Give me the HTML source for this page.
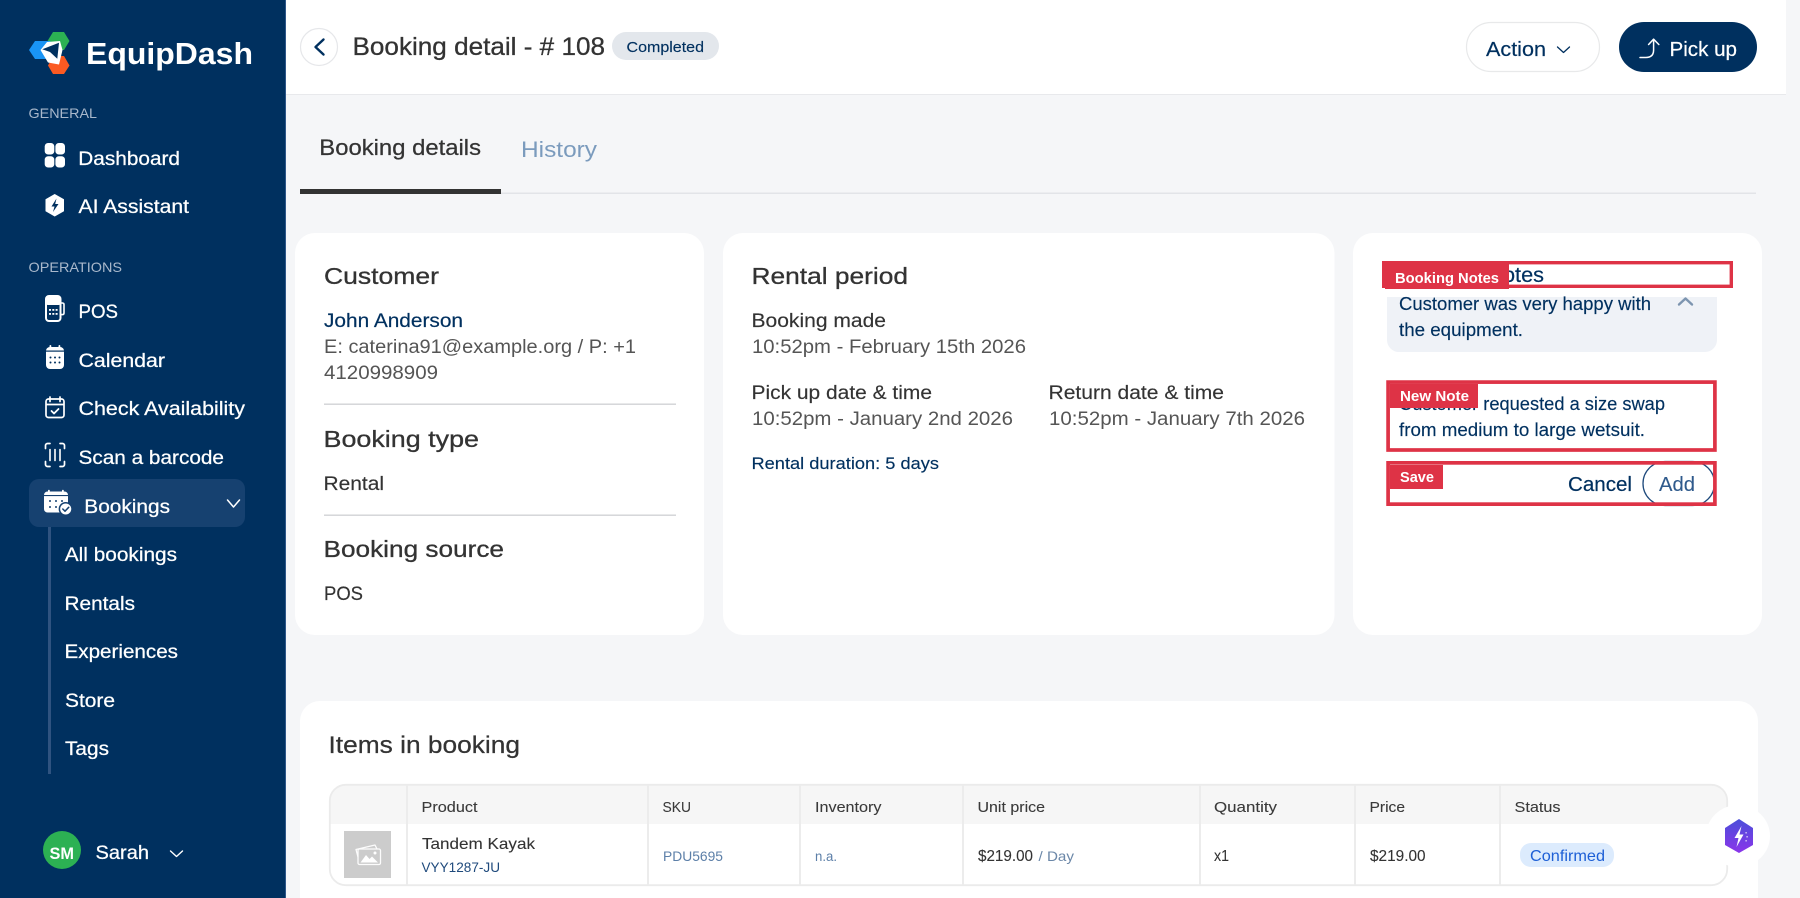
<!DOCTYPE html>
<html lang="en">
<head>
<meta charset="utf-8">
<title>Booking detail - # 108</title>
<style>
html,body{margin:0;padding:0;width:1800px;height:898px;overflow:hidden;background:#f5f6f8}
svg{display:block;position:absolute;left:0;top:0}
text{font-family:"Liberation Sans",sans-serif;white-space:pre}
.nav{font-size:19.5px;fill:#fff;stroke:#fff;stroke-width:.25px}
.sec{font-size:14px;fill:#a9b8cb}
.h{font-size:23px;fill:#333;stroke:#333;stroke-width:.3px}
.b{font-size:19px;fill:#333;stroke:#333;stroke-width:.15px}
.g{font-size:19px;fill:#555}
.n{font-size:18px;fill:#00305f;stroke:#00305f;stroke-width:.15px}
.lab{font-size:14.5px;font-weight:700;fill:#fff}
.th{font-size:15px;fill:#3a3a3a;stroke:#3a3a3a;stroke-width:.1px}
.td{font-size:16px;fill:#333;stroke:#333;stroke-width:.1px}
.lnk{font-size:14px;fill:#5c7fa8}
</style>
</head>
<body>
<svg width="1800" height="898" viewBox="0 0 1800 898" xmlns="http://www.w3.org/2000/svg">
<defs>
<linearGradient id="ai" x1="0" y1="0" x2="0" y2="1"><stop offset="0" stop-color="#4b4fd9"/><stop offset="1" stop-color="#8b35ea"/></linearGradient>
</defs>

<!-- main bg -->
<rect width="1800" height="898" fill="#f5f6f8"/>

<!-- header -->
<rect x="286" y="0" width="1500" height="94" fill="#fff"/>
<rect x="286" y="94" width="1500" height="1" fill="#e8e9ec"/>
<circle cx="319" cy="47" r="18.5" fill="#fff" stroke="#e6e7ea" stroke-width="1.2"/>
<path d="M323.5 39.5L315.5 47L323.5 54.5" fill="none" stroke="#00305f" stroke-width="2.4" stroke-linecap="round" stroke-linejoin="round"/>
<text x="352.5" y="55" font-size="25" fill="#333" stroke="#333" stroke-width=".3" textLength="252.5" lengthAdjust="spacingAndGlyphs">Booking detail - # 108</text>
<rect x="612" y="32" width="107" height="28" rx="14" fill="#e3e7ec"/>
<text x="626.5" y="52" font-size="15" fill="#00305f" stroke="#00305f" stroke-width=".15" textLength="77.5" lengthAdjust="spacingAndGlyphs">Completed</text>

<rect x="1466.5" y="22.5" width="133" height="49" rx="24.5" fill="#fff" stroke="#e8e9ea" stroke-width="1.2"/>
<text x="1486" y="56" font-size="20" fill="#00305f" stroke="#00305f" stroke-width=".2" textLength="60" lengthAdjust="spacingAndGlyphs">Action</text>
<path d="M1557.5 47L1563.5 52.5L1569.5 47" fill="none" stroke="#00305f" stroke-width="1.3" stroke-linecap="round" stroke-linejoin="round"/>
<rect x="1619" y="22" width="138" height="50" rx="25" fill="#00305f"/>
<path d="M1640 57.5H1646C1651 57.5 1653.6 55 1653.6 50V39.5M1648.6 44.5L1653.6 39.2L1658.8 44.5" fill="none" stroke="#fff" stroke-width="1.5" stroke-linecap="round" stroke-linejoin="round"/>
<text x="1669.5" y="56" font-size="20" fill="#fff" stroke="#fff" stroke-width=".2" textLength="67.5" lengthAdjust="spacingAndGlyphs">Pick up</text>

<!-- tabs -->
<text x="319.3" y="155" font-size="22" fill="#333" stroke="#333" stroke-width=".25" textLength="161.7" lengthAdjust="spacingAndGlyphs">Booking details</text>
<text x="521" y="157" font-size="22" fill="#7b9bbd" textLength="76" lengthAdjust="spacingAndGlyphs">History</text>
<rect x="300" y="192.5" width="1456" height="1.5" fill="#e2e4e8"/>
<rect x="300" y="189" width="201" height="5" fill="#333"/>

<!-- customer card -->
<rect x="295" y="233" width="409" height="402" rx="20" fill="#fff"/>
<text x="324" y="284" class="h" textLength="115" lengthAdjust="spacingAndGlyphs">Customer</text>
<text x="324" y="327" font-size="19" fill="#00305f" stroke="#00305f" stroke-width=".2" textLength="139" lengthAdjust="spacingAndGlyphs">John Anderson</text>
<text x="324" y="353" class="g" textLength="312" lengthAdjust="spacingAndGlyphs">E: caterina91@example.org / P: +1</text>
<text x="324" y="379" class="g" textLength="114" lengthAdjust="spacingAndGlyphs">4120998909</text>
<rect x="324" y="403.5" width="352" height="1.4" fill="#d2d3d6"/>
<text x="323.5" y="447" class="h" textLength="155.5" lengthAdjust="spacingAndGlyphs">Booking type</text>
<text x="323.5" y="490" class="b" textLength="60.5" lengthAdjust="spacingAndGlyphs">Rental</text>
<rect x="324" y="514.5" width="352" height="1.4" fill="#d2d3d6"/>
<text x="323.5" y="557" class="h" textLength="180.5" lengthAdjust="spacingAndGlyphs">Booking source</text>
<text x="324" y="600" class="b" textLength="39" lengthAdjust="spacingAndGlyphs">POS</text>

<!-- rental card -->
<rect x="723" y="233" width="611.5" height="402" rx="20" fill="#fff"/>
<text x="751.5" y="284" class="h" textLength="156.5" lengthAdjust="spacingAndGlyphs">Rental period</text>
<text x="751.5" y="327" class="b" textLength="134.5" lengthAdjust="spacingAndGlyphs">Booking made</text>
<text x="752" y="353" class="g" textLength="274" lengthAdjust="spacingAndGlyphs">10:52pm - February 15th 2026</text>
<text x="751.5" y="399" class="b" textLength="180.5" lengthAdjust="spacingAndGlyphs">Pick up date &amp; time</text>
<text x="752" y="425" class="g" textLength="261" lengthAdjust="spacingAndGlyphs">10:52pm - January 2nd 2026</text>
<text x="1048.5" y="399" class="b" textLength="175.5" lengthAdjust="spacingAndGlyphs">Return date &amp; time</text>
<text x="1049" y="425" class="g" textLength="256" lengthAdjust="spacingAndGlyphs">10:52pm - January 7th 2026</text>
<text x="751.5" y="469" font-size="17" fill="#00305f" stroke="#00305f" stroke-width=".15" textLength="187.5" lengthAdjust="spacingAndGlyphs">Rental duration: 5 days</text>

<!-- notes card -->
<rect x="1353" y="233" width="409" height="402" rx="20" fill="#fff"/>
<path d="M1387 290H1717V340A12 12 0 0 1 1705 352H1399A12 12 0 0 1 1387 340Z" fill="#eff2f7"/>
<rect x="1383" y="288" width="350" height="9" fill="#fff"/>
<text x="1399" y="310" class="n" textLength="252" lengthAdjust="spacingAndGlyphs">Customer was very happy with</text>
<text x="1399" y="336" class="n" textLength="124" lengthAdjust="spacingAndGlyphs">the equipment.</text>
<path d="M1679 304.5L1685.5 298.5L1692 304.5" fill="none" stroke="#7d95b0" stroke-width="2.4" stroke-linecap="round" stroke-linejoin="round"/>

<!-- annotation: booking notes -->
<rect x="1383.7" y="262.7" width="347.6" height="23.6" fill="#fff" stroke="#de3346" stroke-width="3.4"/>
<text x="1386" y="282" font-size="21" fill="#00305f" stroke="#00305f" stroke-width=".2" textLength="116" lengthAdjust="spacingAndGlyphs">Booking N</text>
<text x="1503" y="282" font-size="21" fill="#00305f" stroke="#00305f" stroke-width=".2" textLength="41" lengthAdjust="spacingAndGlyphs">otes</text>
<rect x="1385" y="264" width="124" height="25" fill="#de3346"/>
<text x="1395" y="283" class="lab" textLength="104" lengthAdjust="spacingAndGlyphs">Booking Notes</text>

<!-- annotation: new note -->
<rect x="1388.1" y="382.1" width="326.8" height="67.9" fill="#fff" stroke="#de3346" stroke-width="3.7"/>
<text x="1399" y="410" class="n" textLength="266" lengthAdjust="spacingAndGlyphs">Customer requested a size swap</text>
<text x="1399" y="436" class="n" textLength="246" lengthAdjust="spacingAndGlyphs">from medium to large wetsuit.</text>
<rect x="1390" y="384" width="88" height="24" fill="#de3346"/>
<text x="1400" y="401" class="lab" textLength="69" lengthAdjust="spacingAndGlyphs">New Note</text>

<!-- annotation: save -->
<rect x="1388.1" y="462.85" width="326.8" height="41.3" fill="#fff"/>
<text x="1568" y="491" font-size="20" fill="#00305f" stroke="#00305f" stroke-width=".2" textLength="64" lengthAdjust="spacingAndGlyphs">Cancel</text>
<rect x="1643" y="461.5" width="71.5" height="44" rx="22" fill="#fff" stroke="#1f4a7c" stroke-width="1.3"/>
<text x="1659" y="491" font-size="20" fill="#2f5a8c" stroke="#2f5a8c" stroke-width=".1" textLength="36" lengthAdjust="spacingAndGlyphs">Add</text>
<rect x="1388.1" y="462.85" width="326.8" height="41.3" fill="none" stroke="#de3346" stroke-width="3.7"/>
<rect x="1390" y="465" width="53" height="24" fill="#de3346"/>
<text x="1400" y="482" class="lab" textLength="34" lengthAdjust="spacingAndGlyphs">Save</text>

<!-- items card -->
<path d="M320 701H1738A20 20 0 0 1 1758 721V898H300V721A20 20 0 0 1 320 701Z" fill="#fff"/>
<text x="328.5" y="753" font-size="24" fill="#333" stroke="#333" stroke-width=".25" textLength="191.5" lengthAdjust="spacingAndGlyphs">Items in booking</text>
<path d="M330 824V801A16 16 0 0 1 346 785H1711A16 16 0 0 1 1727 801V824Z" fill="#f6f6f6"/>
<rect x="329.8" y="784.8" width="1397.4" height="100.4" rx="16" fill="none" stroke="#ebebeb" stroke-width="1.8"/>
<g fill="#ececec">
<rect x="406" y="785" width="2" height="100"/>
<rect x="647" y="785" width="2" height="100"/>
<rect x="799" y="785" width="2" height="100"/>
<rect x="962" y="785" width="2" height="100"/>
<rect x="1199" y="785" width="2" height="100"/>
<rect x="1354" y="785" width="2" height="100"/>
<rect x="1499" y="785" width="2" height="100"/>
</g>
<text x="421.5" y="812" class="th" textLength="56" lengthAdjust="spacingAndGlyphs">Product</text>
<text x="662.5" y="812" class="th" textLength="28.5" lengthAdjust="spacingAndGlyphs">SKU</text>
<text x="815" y="812" class="th" textLength="66.5" lengthAdjust="spacingAndGlyphs">Inventory</text>
<text x="977.5" y="812" class="th" textLength="67.5" lengthAdjust="spacingAndGlyphs">Unit price</text>
<text x="1214" y="812" class="th" textLength="63" lengthAdjust="spacingAndGlyphs">Quantity</text>
<text x="1369.5" y="812" class="th" textLength="35.5" lengthAdjust="spacingAndGlyphs">Price</text>
<text x="1514.5" y="812" class="th" textLength="46" lengthAdjust="spacingAndGlyphs">Status</text>

<rect x="344" y="831" width="47" height="47" fill="#ccc"/>
<g fill="none" stroke="#fff" stroke-width="1.3" stroke-linejoin="round" opacity=".95">
<rect x="358" y="849" width="22.5" height="15.5" rx="1.5"/>
<path d="M358 857L356 849.5L375 845L377 849"/>
</g>
<path d="M360.5 862.5L366 855L369.5 859L372 856.5L378 862.5Z" fill="#fff"/>
<circle cx="375" cy="853" r="1.5" fill="#fff"/>

<text x="422" y="849" class="td" textLength="113" lengthAdjust="spacingAndGlyphs">Tandem Kayak</text>
<text x="421.5" y="872" font-size="14" fill="#1f4a7c" textLength="78.5" lengthAdjust="spacingAndGlyphs">VYY1287-JU</text>
<text x="663" y="861" class="lnk" textLength="60" lengthAdjust="spacingAndGlyphs">PDU5695</text>
<text x="815" y="861" class="lnk" textLength="22" lengthAdjust="spacingAndGlyphs">n.a.</text>
<text x="978" y="861" class="td" textLength="55" lengthAdjust="spacingAndGlyphs">$219.00</text>
<text x="1038.5" y="861" font-size="14" fill="#6b87a8" textLength="35.5" lengthAdjust="spacingAndGlyphs">/ Day</text>
<text x="1214" y="861" class="td" textLength="15" lengthAdjust="spacingAndGlyphs">x1</text>
<text x="1370" y="861" class="td" textLength="55.6" lengthAdjust="spacingAndGlyphs">$219.00</text>
<rect x="1520" y="843" width="94" height="24" rx="11" fill="#dcebfd"/>
<text x="1530" y="861" font-size="16" fill="#1d5fd6" textLength="75" lengthAdjust="spacingAndGlyphs">Confirmed</text>

<!-- AI float -->
<ellipse cx="1738" cy="836" rx="32" ry="31" fill="#fff"/>
<path d="M1739 819L1753 828V845L1739 853L1725 845V828Z" fill="url(#ai)"/>
<path d="M1741.5 826L1734.5 838H1738.5L1736.5 847L1743.5 834.5H1739.5Z" fill="#fff"/>
<g fill="#fff" opacity=".8"><rect x="1745.5" y="832" width="1.2" height="1.5"/><rect x="1746.5" y="836" width="1.2" height="1.5"/><rect x="1745.5" y="840" width="1.2" height="1.5"/></g>

<!-- sidebar -->
<rect x="0" y="0" width="285" height="898" fill="#00305f"/>
<rect x="285" y="0" width="1" height="898" fill="#2e5789"/>

<!-- logo -->
<path d="M47.5 41L53 32H64L69.5 41L64 50H53Z" fill="#2cb153"/>
<path d="M48 65.5L53 56H64L69.5 65.5L64 74H53Z" fill="#fb5a22"/>
<path d="M29 50L35 41H50L56 50L50 59H35Z" fill="#1994f5"/>
<path d="M40.5 50L47 42L60 41L62.5 50L59 64.5L48 62.5Z" fill="#fff"/>
<path d="M42.3 49.3L59 42.7L57.3 58.7L50 52Z" fill="#00305f"/>
<text x="86" y="64" font-size="31" font-weight="700" fill="#fff" textLength="167" lengthAdjust="spacingAndGlyphs">EquipDash</text>

<text x="28.5" y="118" class="sec" textLength="68.5" lengthAdjust="spacingAndGlyphs">GENERAL</text>
<g fill="#fff">
<rect x="44.7" y="143" width="9.6" height="11.5" rx="3.4"/><rect x="55.4" y="143" width="9.6" height="11.5" rx="3.4"/>
<rect x="44.7" y="156.3" width="9.6" height="11.2" rx="3.4"/><rect x="55.4" y="156.3" width="9.6" height="11.2" rx="3.4"/>
</g>
<text x="78.3" y="165" class="nav" textLength="101.7" lengthAdjust="spacingAndGlyphs">Dashboard</text>
<path d="M54.7 194.5L63.5 199.5V211L54.7 216L46 211V199.5Z" fill="#fff" stroke="#fff" stroke-linejoin="round"/>
<path d="M56.5 198.5L51.5 206.5H54.5L53 212L58.5 204H55.2Z" fill="#00305f"/>
<text x="78.5" y="213" class="nav" textLength="110.5" lengthAdjust="spacingAndGlyphs">AI Assistant</text>

<text x="28.5" y="272" class="sec" textLength="93.5" lengthAdjust="spacingAndGlyphs">OPERATIONS</text>

<!-- POS -->
<rect x="46" y="296" width="14.5" height="25" rx="3" fill="none" stroke="#fff" stroke-width="2"/>
<rect x="46" y="296" width="14.5" height="9" rx="2" fill="#fff"/>
<path d="M61 303H62.5A1.6 1.6 0 0 1 64 304.6V313A1.6 1.6 0 0 1 62.5 314.6H61" fill="none" stroke="#fff" stroke-width="1.6"/>
<g fill="#fff"><rect x="49" y="309" width="2" height="1.8"/><rect x="52.3" y="309" width="2" height="1.8"/><rect x="55.6" y="309" width="2" height="1.8"/><rect x="49" y="313" width="2" height="1.8"/><rect x="52.3" y="313" width="2" height="1.8"/><rect x="55.6" y="313" width="2" height="1.8"/></g>
<text x="78.5" y="318" class="nav" textLength="39.5" lengthAdjust="spacingAndGlyphs">POS</text>

<!-- Calendar -->
<rect x="46" y="347" width="18" height="22" rx="4" fill="#fff"/>
<rect x="46" y="350.5" width="18" height="1.2" fill="#00305f"/>
<g fill="#fff"><rect x="49.5" y="345" width="1.8" height="4" rx=".9"/><rect x="58.5" y="345" width="1.8" height="4" rx=".9"/></g>
<g fill="#00305f"><circle cx="50.5" cy="357.5" r="1"/><circle cx="55" cy="357.5" r="1"/><circle cx="59.5" cy="357.5" r="1"/><circle cx="50.5" cy="362.5" r="1"/><circle cx="55" cy="362.5" r="1"/><circle cx="59.5" cy="362.5" r="1"/></g>
<text x="78.5" y="367" class="nav" textLength="86.5" lengthAdjust="spacingAndGlyphs">Calendar</text>

<!-- Check availability -->
<rect x="46" y="399" width="18" height="18.5" rx="2.5" fill="none" stroke="#fff" stroke-width="1.7"/>
<path d="M46 404.5H64" stroke="#fff" stroke-width="1.7"/>
<path d="M50 397V401.5M60 397V401.5" stroke="#fff" stroke-width="1.7" stroke-linecap="round"/>
<path d="M51.5 411L54 413.5L58.5 409" fill="none" stroke="#fff" stroke-width="1.8" stroke-linecap="round" stroke-linejoin="round"/>
<text x="78.5" y="415" class="nav" textLength="166.5" lengthAdjust="spacingAndGlyphs">Check Availability</text>

<!-- Scan -->
<path d="M50 443.5H47.5A2 2 0 0 0 45.5 445.5V448.5M60 443.5H62.5A2 2 0 0 1 64.5 445.5V448.5M50 466.5H47.5A2 2 0 0 1 45.5 464.5V461.5M60 466.5H62.5A2 2 0 0 0 64.5 464.5V461.5" fill="none" stroke="#fff" stroke-width="1.7" stroke-linecap="round"/>
<path d="M50 449.5V460.5M55 449.5V460.5M60 449.5V460.5" stroke="#fff" stroke-width="1.6" stroke-linecap="round"/>
<text x="78.5" y="464" class="nav" textLength="145.5" lengthAdjust="spacingAndGlyphs">Scan a barcode</text>

<!-- Bookings -->
<rect x="29" y="479" width="216" height="48" rx="10" fill="#164170"/>
<rect x="44" y="491.5" width="24" height="21" rx="3.5" fill="#fff"/>
<rect x="44" y="495" width="24" height="1.1" fill="#164170"/>
<g fill="#fff"><rect x="48" y="489.8" width="1.8" height="4" rx=".9"/><rect x="62" y="489.8" width="1.8" height="4" rx=".9"/></g>
<g fill="#164170"><circle cx="50" cy="501" r="1"/><circle cx="56" cy="501" r="1"/><circle cx="62" cy="501" r="1"/><circle cx="50" cy="507" r="1"/><circle cx="56" cy="507" r="1"/></g>
<circle cx="65.7" cy="509" r="6.3" fill="#fff" stroke="#164170" stroke-width="1.5"/>
<path d="M62.8 509L65 511.2L68.7 507.3" fill="none" stroke="#164170" stroke-width="1.5" stroke-linecap="round" stroke-linejoin="round"/>
<text x="84.3" y="513" class="nav" textLength="85.7" lengthAdjust="spacingAndGlyphs">Bookings</text>
<path d="M227.5 500L233.5 507L239.5 500" fill="none" stroke="#fff" stroke-width="1.5" stroke-linecap="round" stroke-linejoin="round"/>

<rect x="48" y="527" width="3" height="247" fill="#2f5380"/>
<text x="64.8" y="561" class="nav" textLength="112.2" lengthAdjust="spacingAndGlyphs">All bookings</text>
<text x="64.5" y="610" class="nav" textLength="70.5" lengthAdjust="spacingAndGlyphs">Rentals</text>
<text x="64.5" y="658" class="nav" textLength="113.5" lengthAdjust="spacingAndGlyphs">Experiences</text>
<text x="65" y="707" class="nav" textLength="50" lengthAdjust="spacingAndGlyphs">Store</text>
<text x="65" y="755" class="nav" textLength="44" lengthAdjust="spacingAndGlyphs">Tags</text>

<!-- user -->
<circle cx="62" cy="850" r="19" fill="#2cb153"/>
<text x="49.5" y="859" font-size="16.5" font-weight="700" fill="#fff" textLength="24.5" lengthAdjust="spacingAndGlyphs">SM</text>
<text x="95.5" y="859" class="nav" textLength="53.5" lengthAdjust="spacingAndGlyphs">Sarah</text>
<path d="M170.5 851L176.5 856.5L182.5 851" fill="none" stroke="#fff" stroke-width="1.4" stroke-linecap="round" stroke-linejoin="round"/>
</svg>
</body>
</html>
